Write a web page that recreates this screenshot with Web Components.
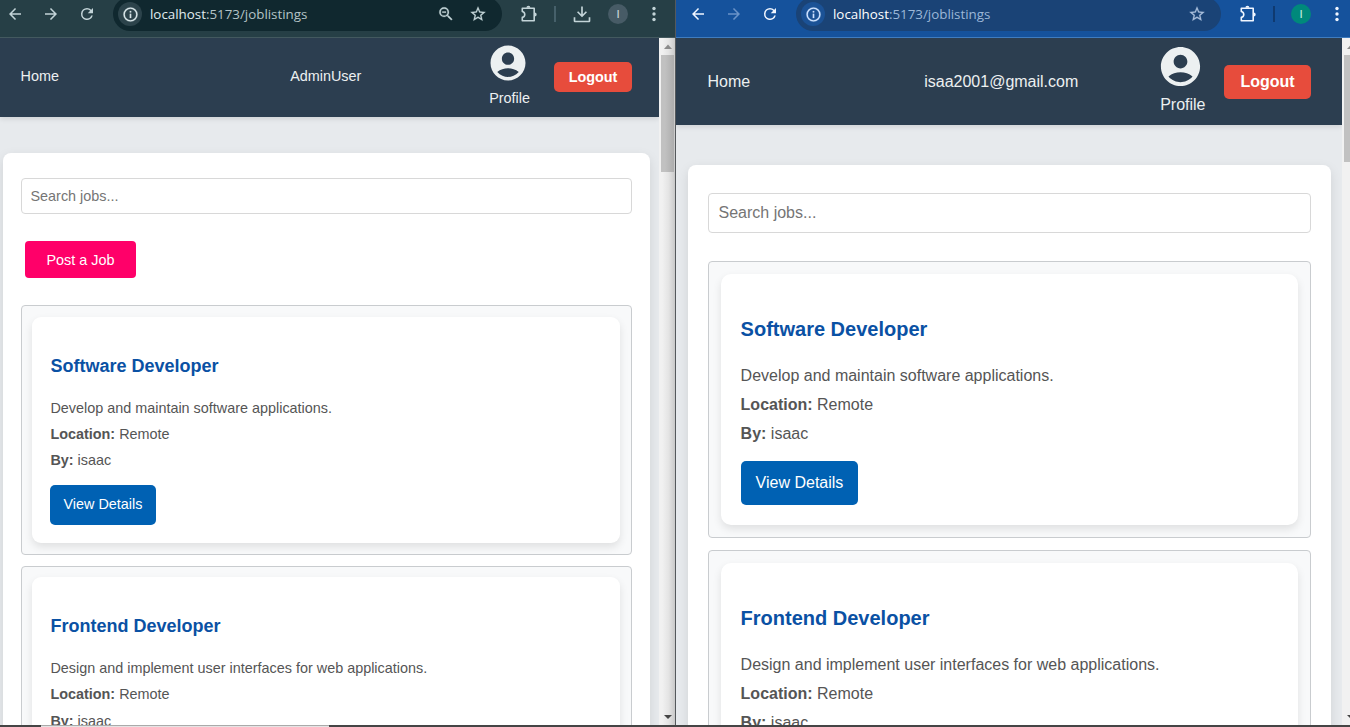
<!DOCTYPE html>
<html lang="en">
<head>
<meta charset="utf-8">
<title>Job Listings</title>
<style>
html,body{margin:0;height:100%;overflow:hidden}
body{font-family:"Liberation Sans",Arial,sans-serif;background:#e9ecef}
.desktop{display:grid;grid-template-columns:676px 674px;height:725px}
#a{
  --bar:#263f46;--line:#43595f;--omni:#10282f;--chip:#2c434b;--ico:#c3d4d8;--fwd:#aebfc4;--site:#d9e6e9;--host:#e0ecef;--path:#b4c3c6;--sep:#46606a;--av:#475b66;--avt:#c4d0d6;--star:#c3d4d8;
  --pagew:659px;--navh:77px;--navpad:0 27px 2px 20.5px;--textup:2px;--fs:14.4px;--pico:42px;--pmt:-4px;--pmb:5.5px;--pml:-2px;--plh:17px;
  --lgap:24px;--lw:78px;--lh:30px;--userx:231.3px;
  --cm:36px 9px 0 3px;--cpad:25px 18px 0;--inh:34px;--inpad:8.5px;--gap:10.8px;--jpad:10.7px 11px 10.7px 10px;
  --cardpad:36px 18px 18px 18.4px;--title:18px;--tlh:27px;--tmb:15px;--lh2:26.1px;--bmt:11.8px;--bml:-.4px;--bpb:2px;--bw:106px;--bh:40px;--rad:9px;
}
#b{
  --bar:#15529c;--line:#3f7cbf;--omni:#1a4376;--chip:#1b5296;--ico:#f0f6ff;--fwd:#6a93c8;--site:#cfe3ff;--host:#fff;--path:#9cb7d8;--sep:#0f3a70;--av:#00897b;--avt:#b9e6df;--star:#a9bedb;
  --pagew:666px;--navh:87px;--navpad:0 31px 0 31.5px;--textup:0px;--fs:16px;--pico:47px;--pmt:-6px;--pmb:5px;--pml:-3.5px;--plh:19px;
  --lgap:18.5px;--lw:87px;--lh:34px;--userx:174px;
  --cm:40px 11px 0 12px;--cpad:28px 20px 0;--inh:38px;--inpad:9.5px;--gap:12px;--jpad:12px;
  --cardpad:40px 20px 20px 19.6px;--title:20px;--tlh:30px;--tmb:17px;--lh2:29px;--bmt:13px;--bml:.4px;--bpb:0px;--bw:117px;--bh:44px;--rad:10px;
}
</style>
</head>
<body>
<div class="desktop">
  <browser-window id="a" admin>
    <browser-toolbar slot="toolbar" admin></browser-toolbar>
    <site-nav slot="page">AdminUser</site-nav>
    <job-board slot="page" admin>
      <job-card heading="Software Developer" by="isaac">Develop and maintain software applications.</job-card>
      <job-card heading="Frontend Developer" by="isaac">Design and implement user interfaces for web applications.</job-card>
    </job-board>
  </browser-window>
  <browser-window id="b">
    <browser-toolbar slot="toolbar"></browser-toolbar>
    <site-nav slot="page">isaa2001@gmail.com</site-nav>
    <job-board slot="page">
      <job-card heading="Software Developer" by="isaac">Develop and maintain software applications.</job-card>
      <job-card heading="Frontend Developer" by="isaac">Design and implement user interfaces for web applications.</job-card>
    </job-board>
  </browser-window>
</div>
<screen-edge></screen-edge>
<script>
const make=(name,render)=>customElements.define(name,class extends HTMLElement{
  constructor(){super();this.attachShadow({mode:'open'});}
  connectedCallback(){this.shadowRoot.innerHTML=render(this);}
});
const box='*{box-sizing:border-box}';
const svg=(d,s=18,c='')=>`<svg class="${c}" width="${s}" height="${s}" viewBox="0 0 24 24" fill="currentColor"><path d="${d}"/></svg>`;
const P={
 back:'M20 11H7.83l5.59-5.59L12 4l-8 8 8 8 1.41-1.41L7.83 13H20z',
 fwd:'M4 11h12.17l-5.59-5.59L12 4l8 8-8 8-1.41-1.41L16.17 13H4z',
 reload:'M17.65 6.35A7.96 7.96 0 0 0 12 4a8 8 0 1 0 7.73 10h-2.08A6 6 0 1 1 12 6c1.66 0 3.14.69 4.22 1.78L13 11h7V4z',
 info:'M11 7h2v2h-2zm0 4h2v6h-2zm1-9a10 10 0 1 0 0 20 10 10 0 0 0 0-20zm0 18a8 8 0 1 1 0-16 8 8 0 0 1 0 16z',
 zoom:'M15.5 14h-.79l-.28-.27A6.47 6.47 0 0 0 16 9.5 6.5 6.5 0 1 0 9.5 16c1.61 0 3.09-.59 4.23-1.57l.27.28v.79l5 4.99L20.49 19zm-6 0a4.5 4.5 0 1 1 0-9 4.5 4.5 0 0 1 0 9zM7 8.8h5v1.5H7z',
 star:'M22 9.24l-7.19-.62L12 2 9.19 8.63 2 9.24l5.46 4.73L5.82 21 12 17.27 18.18 21l-1.63-7.03zM12 15.4l-3.76 2.27 1-4.28-3.32-2.88 4.38-.38L12 6.1l1.71 4.04 4.38.38-3.32 2.88 1 4.28z',
 dl:'M11 3h2v9.2l3.6-3.6L18 10l-6 6-6-6 1.4-1.4L11 12.2zM2 16h2v4h16v-4h2v4.5a1.5 1.5 0 0 1-1.5 1.5h-17A1.5 1.5 0 0 1 2 20.5z',
 user:'M12 2C6.48 2 2 6.48 2 12s4.48 10 10 10 10-4.48 10-10S17.52 2 12 2zm0 4c1.93 0 3.5 1.57 3.5 3.5S13.93 13 12 13s-3.5-1.57-3.5-3.5S10.07 6 12 6zm0 14c-2.03 0-4.43-.82-6.14-2.88a9.947 9.947 0 0 1 12.28 0C16.43 19.18 14.03 20 12 20z'
};
const puzzle='<svg width="20" height="20" viewBox="0 0 20 20"><path d="M3.300 4.200H15.200V16.700H3.300V13.400C6.600 12.600 6.600 8.300 3.300 7.500z" fill="none" stroke="currentColor" stroke-width="1.600" stroke-linejoin="round"/><path d="M7.400 3.800a2 2 0 0 1 4 0zM15.600 8.400a2.100 2.100 0 0 1 0 4.200z" fill="currentColor"/></svg>';

make('browser-window',()=>`<style>${box}
:host{display:grid;grid-template-rows:38px 1fr;min-width:0;overflow:hidden;height:725px}
:host([admin]){border-right:1px solid #55595c}
.body{display:grid;grid-template-columns:var(--pagew) 1fr;min-height:0;overflow:hidden}
.page{background:#e7eaed;overflow:hidden;min-height:0}
</style><slot name="toolbar"></slot><div class="body"><div class="page"><slot name="page"></slot></div><scroll-rail></scroll-rail></div>`);

make('scroll-rail',e=>{const a=e.getRootNode().host.hasAttribute('admin');return `<style>${box}
:host{display:flex;flex-direction:column;justify-content:space-between;overflow:hidden;padding:0 0 3px ${a?2:1}px;background:${a?'linear-gradient(90deg,#f1f1f1 20%,#e4e4e4 60%,#c9c9c9)':'#f1f1f1'}}
.top{flex:none;display:flex;flex-direction:column}
svg{display:block;flex:none;margin-left:${a?0:1}px}
.thumb{height:${a?117:107}px;width:${a?13:15}px;margin-left:${a?0:1}px;background:${a?'linear-gradient(90deg,#c1c1c1 30%,#adadad)':'#c1c1c1'}}
</style><div class="top"><svg width="16" height="17"><path d="M3 11l4-4.500 4 4.500z" fill="#8b8b8b"/></svg><div class="thumb"></div></div>
<svg width="16" height="8"><path d="M3 1h8l-4 4z" fill="#444"/></svg>`});

make('browser-toolbar',e=>{const a=e.hasAttribute('admin');return `<style>${box}
:host{box-sizing:border-box;display:flex;align-items:flex-start;height:38px;background:var(--bar);border-bottom:1px solid var(--line);color:var(--ico);overflow:hidden}
svg{display:block;flex:none}
.nav{display:flex;gap:18px;padding:5px 0 0 ${a?6:13}px;width:${a?113:120}px;flex:none}
.f{color:var(--fwd)}
.omni{display:flex;align-items:center;width:${a?389:425}px;height:34px;margin-top:-3px;padding:0 15px 0 5px;border-radius:17px;background:var(--omni);flex:none}
.chip{width:24px;height:24px;border-radius:12px;background:var(--chip);display:grid;place-items:center;color:var(--site)}
.chip path,.acts path{stroke:currentColor;stroke-width:.3}
.url{margin-left:8px;flex:1;font:13.350px/20px "Open Sans","Noto Sans",sans-serif;color:var(--path);white-space:nowrap}
.url span{color:var(--host)}
.acts{display:flex;gap:14px;color:var(--star)}
.tools{display:flex;align-items:center;height:28px;flex:none;padding-left:17px}
.sep{width:2px;height:16px;background:var(--sep);margin:0 16px 0 15px}
.av{width:20px;height:20px;border-radius:50%;background:var(--av);color:var(--avt);display:grid;place-items:center;font:600 10.500px/20px "Open Sans",sans-serif;margin-left:${a?16:0}px}
.dots{margin-left:17px}
</style><div class="nav">${svg(P.back)}${svg(P.fwd,18,a?'':'f')}${svg(P.reload)}</div>
<div class="omni"><div class="chip">${svg(P.info,17)}</div><div class="url"><span>localhost</span>:5173/joblistings</div><div class="acts">${a?svg(P.zoom):''}${svg(P.star)}</div></div>
<div class="tools">${puzzle}<div class="sep"></div>${a?svg(P.dl,20):''}<div class="av">I</div>
<svg class="dots" width="18" height="18" viewBox="0 0 18 18" fill="currentColor"><circle cx="9" cy="3.500" r="1.700"/><circle cx="9" cy="9" r="1.700"/><circle cx="9" cy="14.500" r="1.700"/></svg></div>`});

make('site-nav',()=>`<style>${box}
:host{display:flex;align-items:center;position:relative;height:var(--navh);padding:var(--navpad);background:#2c3e50;color:#ecf0f1;font-size:var(--fs);box-shadow:0 2px 5px rgba(0,0,0,.1)}
.link{padding-bottom:var(--textup)}
.user{margin-left:var(--userx)}
.right{display:flex;align-items:center;gap:var(--lgap);margin-left:auto}
.profile{display:flex;flex-direction:column;align-items:flex-start;line-height:var(--plh)}
svg{display:block;width:var(--pico);height:var(--pico);margin:var(--pmt) 0 var(--pmb) var(--pml)}
button{width:var(--lw);height:var(--lh);border:0;border-radius:5px;background:#e74c3c;color:#fff;font:bold var(--fs) "Liberation Sans",sans-serif;padding:0}
</style><span class="link">Home</span><span class="link user"><slot></slot></span><div class="right"><div class="profile">${svg(P.user,47)}<span>Profile</span></div><button>Logout</button></div>`);

make('job-board',e=>`<style>${box}
:host{display:flex;flex-direction:column;margin:var(--cm);padding:var(--cpad);height:900px;background:#fff;border-radius:8px;box-shadow:0 4px 12px rgba(0,0,0,.1)}
input{height:calc(var(--inh) + 2px);flex:none;border:1px solid #d8d8d8;border-radius:4px;padding:0 var(--inpad);font:var(--fs) "Liberation Sans",sans-serif;background:#fff}
input::placeholder{color:#757575}
.post{width:111px;height:37px;flex:none;margin:27px 0 0 4px;border:0;border-radius:4px;background:#ff0069;color:#fff;font:var(--fs) "Liberation Sans",sans-serif;padding:0}
.list{display:flex;flex-direction:column;gap:var(--gap);margin-top:${e.hasAttribute('admin')?27.4:28}px}
</style><input placeholder="Search jobs...">${e.hasAttribute('admin')?'<button class="post">Post a Job</button>':''}<div class="list"><slot></slot></div>`);

make('job-card',e=>`<style>${box}
:host{display:block;border:1px solid #c9cccf;border-radius:4px;background:#f8f9fa;padding:var(--jpad)}
.card{background:#fff;border-radius:var(--rad);padding:var(--cardpad);box-shadow:0 4px 8px rgba(0,0,0,.1);color:#555;font-size:var(--fs);line-height:var(--lh2)}
h3{margin:0 0 var(--tmb);font-size:var(--title);line-height:var(--tlh);color:#0a51a4}
p{margin:0}
button{display:block;width:var(--bw);height:var(--bh);margin:var(--bmt) 0 0 var(--bml);border:0;border-radius:5px;background:#0061b3;color:#fff;font:var(--fs) "Liberation Sans",sans-serif;padding:0 0 var(--bpb)}
</style><div class="card"><h3>${e.getAttribute('heading')}</h3><p><slot></slot></p><p><b>Location:</b> Remote</p><p><b>By:</b> ${e.getAttribute('by')}</p><button>View Details</button></div>`);

make('screen-edge',()=>`<style>
:host{display:grid;grid-template-columns:41px 288px 1fr;height:2px;background:#454545}
i{grid-column:2;background:#e4e4e4;border-top:1px solid #aaa}
</style><i></i>`);
</script>
</body>
</html>
